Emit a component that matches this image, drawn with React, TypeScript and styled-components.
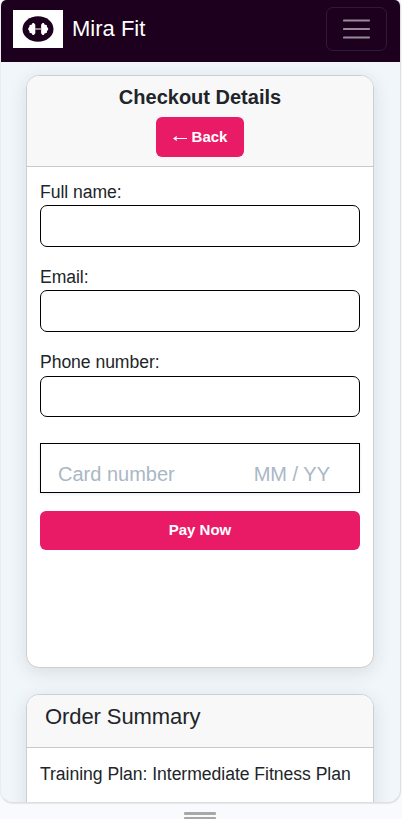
import React from "react";
import styled, { createGlobalStyle } from "styled-components";

const GlobalStyle = createGlobalStyle`
  *, *::before, *::after { box-sizing: border-box; }
  html, body { margin: 0; padding: 0; overflow: hidden; }
  body {
    background: #f9fafe;
    color: #212529;
    font-family: "Liberation Sans", Arial, sans-serif;
  }
`;

const Frame = styled.div`
  height: 819px;
  display: flex;
  flex-direction: column;
  background: #f9fafe;
`;

const Screen = styled.div`
  width: 401px;
  height: 803px;
  flex: none;
  overflow: hidden;
  background: #f1f6fa;
  border: 1px solid #dedfe1;
  border-top: 0;
  border-left-color: #e9edf1;
  border-radius: 6px 6px 13px 13px;
  box-shadow: 0 1px 1px rgba(0, 0, 0, 0.08);
`;

const Navbar = styled.nav`
  height: 62px;
  margin-left: -1px;
  padding: 0 13px;
  display: flex;
  align-items: center;
  justify-content: space-between;
  background: #1c001d;
`;

const Brand = styled.div`
  display: flex;
  align-items: center;
  gap: 9px;
  padding-bottom: 4px;
  color: #fff;
  font-size: 22px;
  line-height: 38px;
`;

const Logo = styled.svg`
  display: block;
  width: 50px;
  height: 38px;
  background: #fff;
`;

const Toggler = styled.button`
  width: 61px;
  height: 44px;
  margin-bottom: 4px;
  padding: 0;
  display: flex;
  align-items: center;
  justify-content: center;
  background: transparent;
  border: 1px solid #331a34;
  border-radius: 7px;
`;

const Content = styled.main`
  padding: 13px 26px 0 25px;
  display: flex;
  flex-direction: column;
  gap: 26px;
`;

const Card = styled.section<{ $height: number }>`
  height: ${(p) => p.$height}px;
  background: #fff;
  border: 1px solid #ccced0;
  border-radius: 13px;
  box-shadow: 0 4px 18px rgba(30, 40, 45, 0.12);
  overflow: hidden;
`;

const CheckoutHeader = styled.header`
  height: 91px;
  padding-top: 9px;
  display: flex;
  flex-direction: column;
  align-items: center;
  gap: 8px;
  background: #f8f8f8;
  border-bottom: 1px solid #c8c9ca;
`;

const CheckoutTitle = styled.h1`
  margin: 0;
  font-size: 20px;
  line-height: 24px;
  font-weight: 700;
`;

const Button = styled.button<{ $wide?: boolean }>`
  width: ${(p) => (p.$wide ? "100%" : "88px")};
  height: ${(p) => (p.$wide ? 39 : 40)}px;
  padding: 0;
  display: flex;
  align-items: center;
  justify-content: center;
  gap: 4px;
  border: 0;
  border-radius: 6px;
  background: #e91b66;
  color: #fff;
  font: 700 15px/20px "Liberation Sans", Arial, sans-serif;
`;

const Form = styled.form`
  padding: 12.8px 13px 0;
`;

const Field = styled.div`
  height: 85.3px;
`;

const Label = styled.label`
  display: block;
  height: 25.2px;
  font-size: 17.6px;
  line-height: 24.4px;
  letter-spacing: -0.06px;
`;

const Input = styled.input`
  display: block;
  width: 100%;
  height: 41.7px;
  padding: 6px 12px;
  background: #fff;
  border: 1px solid #000;
  border-radius: 7px;
  font-size: 18px;
  outline: 0;
`;

const PaymentField = styled.div`
  height: 50px;
  margin: 7.3px 0 18px;
  padding: 12px 29px 0 17px;
  display: flex;
  justify-content: space-between;
  border: 1px solid #000;
  color: #aab7c4;
  font-size: 20px;
  line-height: 36px;
  box-shadow: 0 1px 3px #e6ebf1;
`;

const SummaryHeader = styled.header`
  height: 53px;
  padding: 8px 18px;
  background: #f8f8f8;
  border-bottom: 1px solid #c8c9ca;
`;

const SummaryTitle = styled.h2`
  margin: 0;
  font-size: 22px;
  line-height: 28px;
  font-weight: 400;
  letter-spacing: -0.09px;
`;

const SummaryBody = styled.p`
  margin: 0;
  padding: 13px;
  font-size: 17.6px;
  line-height: 27px;
  letter-spacing: -0.04px;
  white-space: nowrap;
`;

const ResizeHandle = styled.div`
  width: 32px;
  height: 8px;
  margin: 9px 0 0 184px;
  display: flex;
  flex-direction: column;
  gap: 2px;

  &::before,
  &::after {
    content: "";
    height: 3px;
    border-radius: 1px;
    background: #a8a8a8;
  }
`;

export default function App() {
  return (
    <Frame>
      <GlobalStyle />
      <Screen>
        <Navbar>
          <Brand>
            <Logo viewBox="0 0 50 38" aria-hidden="true">
              <ellipse cx="25" cy="19" rx="15.5" ry="12.8" fill="#1c001d" />
              <path
                fill="#fff"
                d="M15 19l1.5-2.4v-1.3l2.4-.9.6-1.3h1.4l1.4 1.6v8.6l-1.4 1.6h-1.4l-.6-1.3-2.4-.9v-1.3zM35.4 19l-1.5-2.4v-1.3l-2.4-.9-.6-1.3h-1.4l-1.4 1.6v8.6l1.4 1.6h1.4l.6-1.3 2.4-.9v-1.3z"
              />
              <path d="M22 19h6.4" stroke="#b9adb9" strokeWidth="1.6" />
            </Logo>
            Mira Fit
          </Brand>
          <Toggler aria-label="Toggle navigation">
            <svg width="28" height="20" viewBox="0 0 28 20" aria-hidden="true">
              <path
                d="M1 1.5h25M1 10h25M1 18.5h25"
                stroke="#988b99"
                strokeWidth="2.2"
                strokeLinecap="round"
              />
            </svg>
          </Toggler>
        </Navbar>
        <Content>
          <Card $height={593}>
            <CheckoutHeader>
              <CheckoutTitle>Checkout Details</CheckoutTitle>
              <Button>
                <svg width="15" height="9" viewBox="0 0 15 9" aria-hidden="true">
                  <path d="M1 5.5h13" stroke="#fff" strokeWidth="1.1" />
                  <path d="M0 5.5 4 2.7 3.3 5.5 4 8.3z" fill="#fff" />
                </svg>
                Back
              </Button>
            </CheckoutHeader>
            <Form onSubmit={(e) => e.preventDefault()}>
              <Field>
                <Label htmlFor="name">Full name:</Label>
                <Input id="name" />
              </Field>
              <Field>
                <Label htmlFor="email">Email:</Label>
                <Input id="email" type="email" />
              </Field>
              <Field>
                <Label htmlFor="phone">Phone number:</Label>
                <Input id="phone" type="tel" />
              </Field>
              <PaymentField>
                <span>Card number</span>
                <span>MM / YY</span>
              </PaymentField>
              <Button $wide>Pay Now</Button>
            </Form>
          </Card>
          <Card $height={200}>
            <SummaryHeader>
              <SummaryTitle>Order Summary</SummaryTitle>
            </SummaryHeader>
            <SummaryBody>Training Plan: Intermediate Fitness Plan</SummaryBody>
          </Card>
        </Content>
      </Screen>
      <ResizeHandle />
    </Frame>
  );
}
